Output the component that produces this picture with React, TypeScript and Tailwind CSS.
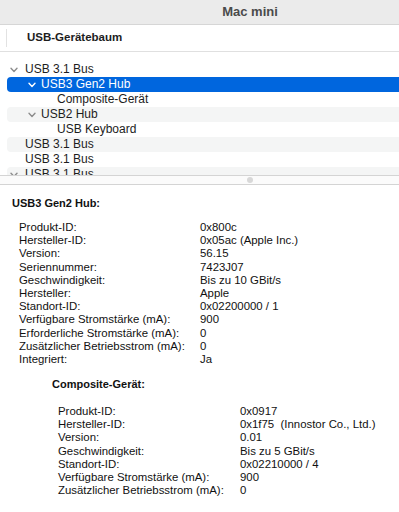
import React from "react";

const Chevron = ({ white }: { white?: boolean }) => (
  <svg width="8" height="6" viewBox="0 0 8 6" className="shrink-0">
    <path d="M1 1.2 L4 4.4 L7 1.2" fill="none" stroke={white ? "#ffffff" : "#8c8c8c"} strokeWidth="1.4" strokeLinecap="round" strokeLinejoin="round" />
  </svg>
);

type Row = { text: string; level: number; chevron?: boolean; selected?: boolean; stripe?: boolean };

const rows: Row[] = [
  { text: "USB 3.1 Bus", level: 0, chevron: true },
  { text: "USB3 Gen2 Hub", level: 1, chevron: true, selected: true },
  { text: "Composite-Gerät", level: 2 },
  { text: "USB2 Hub", level: 1, chevron: true, stripe: true },
  { text: "USB Keyboard", level: 2 },
  { text: "USB 3.1 Bus", level: 0, stripe: true },
  { text: "USB 3.1 Bus", level: 0 },
  { text: "USB 3.1 Bus", level: 0, chevron: true, stripe: true },
];

const hub: [string, string][] = [
  ["Produkt-ID:", "0x800c"],
  ["Hersteller-ID:", "0x05ac (Apple Inc.)"],
  ["Version:", "56.15"],
  ["Seriennummer:", "7423J07"],
  ["Geschwindigkeit:", "Bis zu 10 GBit/s"],
  ["Hersteller:", "Apple"],
  ["Standort-ID:", "0x02200000 / 1"],
  ["Verfügbare Stromstärke (mA):", "900"],
  ["Erforderliche Stromstärke (mA):", "0"],
  ["Zusätzlicher Betriebsstrom (mA):", "0"],
  ["Integriert:", "Ja"],
];

const comp: [string, string][] = [
  ["Produkt-ID:", "0x0917"],
  ["Hersteller-ID:", "0x1f75  (Innostor Co., Ltd.)"],
  ["Version:", "0.01"],
  ["Geschwindigkeit:", "Bis zu 5 GBit/s"],
  ["Standort-ID:", "0x02210000 / 4"],
  ["Verfügbare Stromstärke (mA):", "900"],
  ["Zusätzlicher Betriebsstrom (mA):", "0"],
];

function TreeRow({ r }: { r: Row }) {
  const textLeft = r.level === 0 ? 25 : r.level === 1 ? 41 : 57;
  const chevLeft = r.level === 0 ? 10 : 28;
  const bg = r.selected
    ? "bg-[#0066de] text-white"
    : r.stripe
    ? "bg-[#f4f5f5] text-[#1d1d1d]"
    : "bg-white text-[#1d1d1d]";
  return (
    <div className="h-[15px] shrink-0 pl-[7px]">
      <div className={`h-[15px] rounded-l-[4px] relative flex items-center ${bg}`}>
        {r.chevron && (
          <div className="absolute top-[5px]" style={{ left: chevLeft - 7 }}>
            <Chevron white={r.selected} />
          </div>
        )}
        <span className="text-[12px] leading-[15px] whitespace-nowrap" style={{ paddingLeft: textLeft - 7 }}>
          {r.text}
        </span>
      </div>
    </div>
  );
}

function Details({ items, labelW }: { items: [string, string][]; labelW: number }) {
  return (
    <div className="flex flex-col">
      {items.map(([k, v], i) => (
        <div key={i} className="flex h-[13.2px] items-center text-[11.4px] leading-[13.2px] whitespace-pre text-[#111]">
          <span className="shrink-0" style={{ width: labelW }}>{k}</span>
          <span>{v}</span>
        </div>
      ))}
    </div>
  );
}

export default function App() {
  return (
    <div className="w-[399px] h-[512px] overflow-hidden bg-white flex flex-col" style={{ fontFamily: '"Liberation Sans", Arial, sans-serif' }}>
      <div className="h-[25px] shrink-0 bg-[#ebebeb] border-b border-[#d6d6d6] flex items-center justify-center pl-[101px]">
        <span className="text-[13px] font-bold text-[#4a4a4a]">Mac mini</span>
      </div>
      <div className="h-[27px] shrink-0 border-b border-[#e0e0e0] flex items-stretch">
        <div className="ml-[6px] w-px bg-[#e2e2e2] my-[4px]" />
        <div className="flex items-center pl-[20px] text-[11.5px] font-bold text-[#1d1d1d]">USB-Gerätebaum</div>
      </div>
      <div className="h-[123px] shrink-0 overflow-hidden pt-[10px] flex flex-col">
        {rows.map((r, i) => (
          <TreeRow key={i} r={r} />
        ))}
      </div>
      <div className="h-[10px] shrink-0 border-t border-b border-[#d4d4d4] bg-[#fbfbfb] flex items-center justify-center pl-[101px]">
        <div className="w-[6px] h-[6px] rounded-full bg-[#d8d8d8]" />
      </div>
      <div className="flex flex-col pt-[11px]">
        <div className="pl-[12px] text-[11px] leading-[14px] font-bold text-[#111]">USB3 Gen2 Hub:</div>
        <div className="pl-[19px] mt-[11px]">
          <Details items={hub} labelW={181} />
        </div>
        <div className="pl-[52px] mt-[11px] text-[11px] leading-[14px] font-bold text-[#111]">Composite-Gerät:</div>
        <div className="pl-[58px] mt-[14px]">
          <Details items={comp} labelW={182} />
        </div>
      </div>
    </div>
  );
}
